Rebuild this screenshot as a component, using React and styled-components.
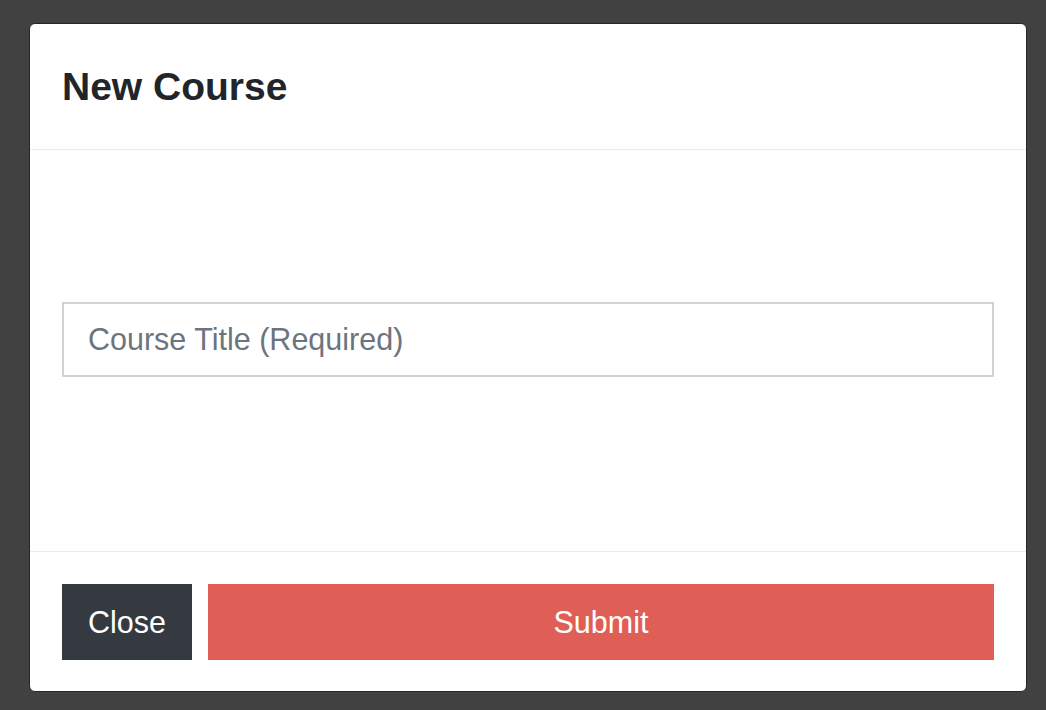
import styled, { createGlobalStyle } from "styled-components";

const GlobalStyle = createGlobalStyle`
    html, body {
        margin: 0;
        padding: 0;
        background: #414141;
        font-family: "Liberation Sans", Arial, sans-serif;
    }
    * {
        box-sizing: border-box;
    }
`;

const Backdrop = styled.div`
    background: #414141;
    height: 710px;
    padding: 23px 19px 0 29px;
`;

const Modal = styled.div`
    background: #fff;
    border: 1px solid #262626;
    border-radius: 6px;
    display: flex;
    flex-direction: column;
    width: 998px;
    overflow: hidden;
`;

const Header = styled.div`
    border-bottom: 1px solid #e9ecef;
    padding: 33px 32px 32px 32px;
`;

const Title = styled.h5`
    color: #212529;
    font-size: 39px;
    font-weight: 700;
    line-height: 60px;
    margin: 0;
`;

const Body = styled.div`
    padding: 152px 32px 174px;
`;

const Input = styled.input`
    border: 2px solid #ced4da;
    border-radius: 0;
    color: #495057;
    display: block;
    font-family: inherit;
    font-size: 30.5px;
    height: 75px;
    outline: none;
    padding: 0 24px;
    width: 100%;

    &::placeholder {
        color: #6c757d;
    }
`;

const Footer = styled.div`
    border-top: 1px solid #e9ecef;
    display: flex;
    gap: 16px;
    padding: 32px 32px 31px;
`;

const Button = styled.button`
    background: ${(props) => (props.primary ? "#df5e56" : "#343a40")};
    border: none;
    border-radius: 0;
    color: #fff;
    cursor: pointer;
    flex: ${(props) => (props.primary ? 1 : "none")};
    font-family: inherit;
    font-size: 30.5px;
    height: 76px;
    padding: 0;
    width: ${(props) => (props.primary ? "auto" : "130px")};
`;

export default function App() {
    return (
        <>
            <GlobalStyle />
            <Backdrop>
                <Modal>
                    <Header>
                        <Title>New Course</Title>
                    </Header>
                    <Body>
                        <Input placeholder="Course Title (Required)" />
                    </Body>
                    <Footer>
                        <Button>Close</Button>
                        <Button primary>Submit</Button>
                    </Footer>
                </Modal>
            </Backdrop>
        </>
    );
}
